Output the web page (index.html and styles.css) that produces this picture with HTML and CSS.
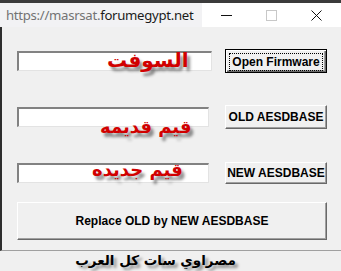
FILE: index.html
```html
<!DOCTYPE html>
<html>
<head>
    <title>AESDBASE Tool</title>
    <meta charset="utf-8">
    <link rel="stylesheet" href="styles.css">
</head>
<body>
    <div class="topline"></div>
    <div class="titlebar">
        <div class="url"><span class="dim">https://masrsat.</span>forumegypt.net</div>
        <div class="caption">
            <span class="cap-btn">
                <svg width="11" height="11" viewBox="0 0 11 11"><path d="M0 5.5H11" stroke="#111" stroke-width="1"/></svg>
            </span>
            <span class="cap-btn">
                <svg width="11" height="11" viewBox="0 0 11 11"><rect x="0.5" y="0.5" width="10" height="10" fill="none" stroke="#c8c8c8"/></svg>
            </span>
            <span class="cap-btn">
                <svg width="11" height="11" viewBox="0 0 11 11"><path d="M0.5 0.5L10.5 10.5M10.5 0.5L0.5 10.5" stroke="#111" stroke-width="1"/></svg>
            </span>
        </div>
    </div>

    <div class="window">
        <div class="row row-first">
            <div class="field field-wide">
                <input class="edit" type="text">
                <span class="tag tag-soft">السوفت</span>
            </div>
            <button class="btn btn-default"><span class="focus">Open Firmware</span></button>
        </div>
        <div class="row">
            <div class="field">
                <input class="edit" type="text">
                <span class="tag tag-old">قيم قديمه</span>
            </div>
            <button class="btn">OLD AESDBASE</button>
        </div>
        <div class="row row-low">
            <div class="field">
                <input class="edit" type="text">
                <span class="tag tag-new">قيم جديده</span>
            </div>
            <button class="btn btn-short">NEW AESDBASE</button>
        </div>
        <button class="btn btn-replace">Replace OLD by NEW AESDBASE</button>
    </div>

    <div class="footer">مصراوي سات كل العرب</div>
</body>
</html>
```

FILE: styles.css
```css
body {
    margin: 0;
    width: 341px;
    height: 271px;
    overflow: hidden;
    background-color: #f0f0f0;
    font-family: "Liberation Sans", Arial, sans-serif;
}
.topline {
    height: 3px;
    background-color: #3b3b3b;
}
.titlebar {
    display: flex;
    height: 24px;
    background-color: #fff;
}
.url {
    flex: none;
    width: 196px;
    padding-left: 6px;
    background-color: #f2f2f4;
    font-family: "Noto Sans", sans-serif;
    font-size: 13.2px;
    letter-spacing: -0.3px;
    line-height: 24px;
    color: #1b1b1b;
    white-space: nowrap;
    overflow: hidden;
}
.url .dim {
    color: #737373;
}
.caption {
    flex: 1;
    display: flex;
    padding-left: 19px;
}
.cap-btn {
    width: 45px;
    display: flex;
    align-items: center;
    padding-top: 1px;
}
.window {
    height: 224px;
    box-sizing: border-box;
    border-left: 2px solid #2e2e2e;
    border-bottom: 1px solid #a0a0a0;
    padding: 22px 0 0 15px;
}
.row {
    display: flex;
    align-items: center;
    height: 24px;
    margin-bottom: 32px;
}
.row-low {
    margin-bottom: 17px;
}
.field {
    position: relative;
    width: 192px;
    height: 20px;
    margin-right: 16px;
}
.field-wide {
    width: 195px;
    margin-right: 13px;
}
.edit {
    box-sizing: border-box;
    width: 100%;
    height: 20px;
    margin: 0;
    padding: 0;
    background-color: #fff;
    border-style: solid;
    border-width: 2px 1px 1px 2px;
    border-color: #828282 #e3e3e3 #e3e3e3 #828282;
    outline: none;
}
.tag {
    position: absolute;
    font-family: "DejaVu Sans", sans-serif;
    font-weight: bold;
    font-size: 18px;
    color: #d10000;
    white-space: nowrap;
    text-shadow: 3px 4px 3px rgba(0, 0, 0, 0.45);
}
.tag-soft {
    left: 90px;
    top: -3px;
    font-size: 20px;
}
.tag-old {
    left: 83px;
    top: 9px;
}
.tag-new {
    left: 75px;
    top: -4px;
}
.btn {
    box-sizing: border-box;
    width: 102px;
    height: 24px;
    padding: 0;
    background-color: #f0f0f0;
    border-style: solid;
    border-width: 1px;
    border-color: #fff #696969 #696969 #fff;
    box-shadow: inset -1px -1px 0 #a0a0a0;
    font-family: "Liberation Sans", Arial, sans-serif;
    font-weight: bold;
    font-size: 12px;
    color: #000;
}
.btn-default {
    border: 1px solid #000;
    box-shadow: inset 1px 1px 0 #fff, inset -1px -1px 0 #696969, inset -2px -2px 0 #a0a0a0;
}
.btn-default .focus {
    display: block;
    margin: 3px;
    padding: 2px 0;
    border: 1px dotted #000;
    line-height: 12px;
}
.btn-short {
    height: 22px;
}
.btn-replace {
    width: 310px;
    height: 38px;
    margin-left: 0;
}
.footer {
    direction: rtl;
    text-align: center;
    padding-right: 30px;
    font-family: "DejaVu Sans", sans-serif;
    font-weight: bold;
    font-size: 13.5px;
    line-height: 18px;
    color: #000;
    text-shadow: 3px 3px 3px rgba(0, 0, 0, 0.4);
}
```
